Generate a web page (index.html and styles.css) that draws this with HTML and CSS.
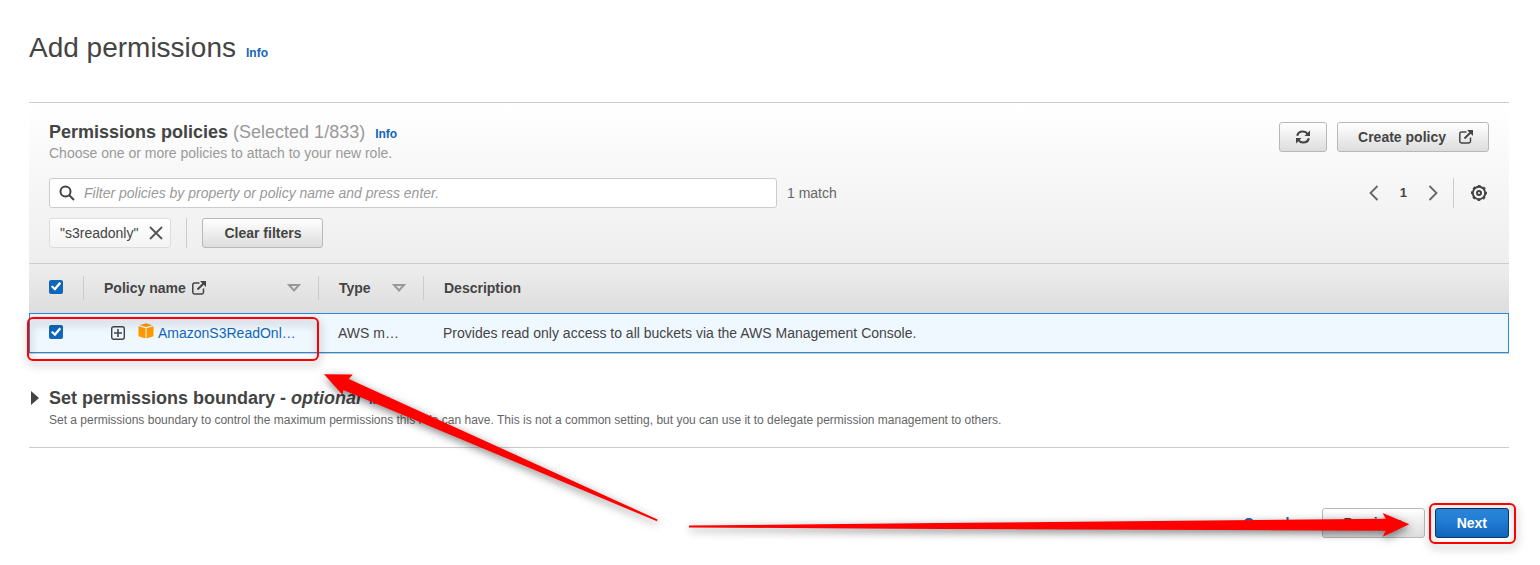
FILE: index.html
```html
<!DOCTYPE html>
<html lang="en">
<head>
<meta charset="utf-8">
<title>Add permissions</title>
<link rel="stylesheet" href="styles.css">
</head>
<body>
<main class="page">
  <header class="page-header">
    <h1>Add permissions</h1>
    <a class="info" href="#">Info</a>
  </header>

  <section class="panel">
    <div class="panel-top">
      <div class="panel-head">
        <div>
          <div class="heading-row">
            <h2>Permissions policies <span class="count">(Selected 1/833)</span></h2>
            <a class="info" href="#">Info</a>
          </div>
          <p class="panel-sub">Choose one or more policies to attach to your new role.</p>
        </div>
        <div class="actions">
          <button class="btn btn-icon" type="button" aria-label="Refresh">
            <svg width="16" height="16" viewBox="0 0 16 16" fill="none" stroke="#444" stroke-width="2.200"><path d="M2.200 6.800C2.800 4 5 2.500 8 2.500c2 0 3.600.9 4.700 2.500M13.800 9.200C13.200 12 11 13.500 8 13.500c-2 0-3.600-.9-4.700-2.500"/><path d="M15 1.500V7H9.500zM1 14.500V9h5.500z" fill="#444" stroke="none"/></svg>
          </button>
          <button class="btn btn-create" type="button">Create policy
            <svg width="16" height="16" viewBox="0 0 16 16" fill="none" stroke="#444" stroke-width="1.500"><path d="M8.500 3H3.500Q1.800 3 1.800 4.700v7.600q0 1.700 1.700 1.700h7.300q1.700 0 1.700-1.700V8.500"/><path d="M6.500 9.500l6-6" stroke-width="2"/><path d="M9 1h6v6z" fill="#444" stroke="none"/></svg>
          </button>
        </div>
      </div>

      <div class="filter-row">
        <div class="search">
          <svg width="16" height="16" viewBox="0 0 16 16" fill="none" stroke="#444" stroke-width="2"><circle cx="6.500" cy="6.500" r="5"/><path d="M10 10l5 5"/></svg>
          <input type="text" aria-label="Filter policies" placeholder="Filter policies by property or policy name and press enter.">
        </div>
        <span class="matches">1 match</span>
        <nav class="pager" aria-label="Pages">
          <button class="plain" type="button" aria-label="Previous page"><svg width="10" height="16" viewBox="0 0 10 16" fill="none" stroke="#666" stroke-width="1.800"><path d="M8.500 1L1.500 8l7 7"/></svg></button>
          <button class="plain page-no" type="button">1</button>
          <button class="plain" type="button" aria-label="Next page"><svg width="10" height="16" viewBox="0 0 10 16" fill="none" stroke="#666" stroke-width="1.800"><path d="M1.500 1l7 7-7 7"/></svg></button>
          <span class="rule"></span>
          <button class="plain" type="button" aria-label="Preferences"><svg width="16" height="16" viewBox="0 0 16 16" fill="none" stroke="#444" stroke-width="2"><circle cx="8" cy="8" r="6.200"/><circle cx="8" cy="8" r="2"/><circle cx="8" cy="8" r="7.300" stroke-width="1.400" stroke-dasharray="2.870 2.870" stroke-dashoffset="1.430"/></svg></button>
        </nav>
      </div>

      <div class="chips">
        <span class="chip">"s3readonly"
          <button class="plain" type="button" aria-label="Remove filter"><svg width="14" height="14" viewBox="0 0 14 14" stroke="#555" stroke-width="1.800"><path d="M1 1l12 12M13 1L1 13"/></svg></button>
        </span>
        <span class="rule"></span>
        <button class="btn" type="button">Clear filters</button>
      </div>
    </div>

    <div class="table-wrap">
      <table>
        <colgroup><col class="c-check"><col class="c-name"><col class="c-type"><col></colgroup>
        <thead>
          <tr>
            <th scope="col"><div class="th-in first"><input type="checkbox" checked aria-label="Select all policies"></div></th>
            <th scope="col"><div class="th-in">Policy name
              <svg class="ext" width="16" height="16" viewBox="0 0 16 16" fill="none" stroke="#444" stroke-width="1.500"><path d="M8.500 3H3.500Q1.800 3 1.800 4.700v7.600q0 1.700 1.700 1.700h7.300q1.700 0 1.700-1.700V8.500"/><path d="M6.500 9.500l6-6" stroke-width="2"/><path d="M9 1h6v6z" fill="#444" stroke="none"/></svg>
              <svg class="sort" width="14" height="8" viewBox="0 0 14 8" fill="none" stroke="#999" stroke-width="2"><path d="M2 1h10L7 6.500z"/></svg></div></th>
            <th scope="col"><div class="th-in">Type
              <svg class="sort" width="14" height="8" viewBox="0 0 14 8" fill="none" stroke="#999" stroke-width="2"><path d="M2 1h10L7 6.500z"/></svg></div></th>
            <th scope="col"><div class="th-in last">Description</div></th>
          </tr>
        </thead>
        <tbody>
          <tr>
            <td class="td-check"><input type="checkbox" checked aria-label="Select AmazonS3ReadOnlyAccess"></td>
            <td><div class="name">
              <button class="plain" type="button" aria-label="Expand"><svg width="14" height="14" viewBox="0 0 14 14" fill="none" stroke="#444" stroke-width="1.400"><rect x=".7" y=".7" width="12.600" height="12.600" rx="2"/><path d="M7 3v8M3 7h8" stroke-width="1.600"/></svg></button>
              <svg class="cube" width="16" height="16" viewBox="0 0 16 16" fill="#f90"><path d="M8 .3l6.300 1.900L8 4.100 1.700 2.200zM.5 3.200l7 2v10.300l-7-2.300zM15.500 3.200l-7 2v10.300l7-2.300z"/></svg>
              <a href="#">AmazonS3ReadOnl…</a></div></td>
            <td class="td-text">AWS m…</td>
            <td class="td-text">Provides read only access to all buckets via the AWS Management Console.</td>
          </tr>
        </tbody>
      </table>
      <span class="mark mark-row"></span>
    </div>
  </section>

  <section class="boundary">
    <details>
      <summary>
        <svg class="caret" width="8" height="14" viewBox="0 0 8 14" fill="#444"><path d="M0 0l8 7-8 7z"/></svg>
        <span class="sum-body">
          <span class="heading-row">
            <span class="sum-title">Set permissions boundary - <em>optional</em></span>
            <a class="info" href="#">Info</a>
          </span>
          <span class="sum-sub">Set a permissions boundary to control the maximum permissions this role can have. This is not a common setting, but you can use it to delegate permission management to others.</span>
        </span>
      </summary>
    </details>
    <svg class="arrow arrow-policy" width="350" height="160" viewBox="0 0 350 160" fill="red"><path d="M4 4.300L32.700 4.500 28.800 9 337.500 149.500 337 151.300 23.300 20 22.700 25z"/></svg>
  </section>

  <footer class="footer">
    <button class="btn btn-link" type="button">Cancel</button>
    <button class="btn" type="button">Previous</button>
    <span class="next-wrap">
      <button class="btn btn-primary" type="button">Next</button>
      <span class="mark mark-next"></span>
    </span>
    <svg class="arrow arrow-next" width="730" height="50" viewBox="0 0 730 50" fill="red"><path d="M4 25.500L255 23 700.700 18.800 697.700 13 724.300 24.300 697.700 36.700 700.700 30.700 255 29 4 27.500z"/></svg>
  </footer>
</main>
</body>
</html>
```
FILE: styles.css
```css
* { box-sizing: border-box; }
body {
  margin: 0;
  background: #fff;
  color: #444;
  font: 14px/20px "Liberation Sans", Arial, sans-serif;
}
h1, h2, p { margin: 0; }
a { color: #1166bb; text-decoration: none; }
svg { flex: none; display: block; }

.page { padding: 30px 31px 27px 29px; }
.page-header { display: flex; align-items: baseline; gap: 10px; }
h1 { font-size: 28px; line-height: 36px; font-weight: 400; }
h2 { font-size: 18px; line-height: 22px; font-weight: 700; }
.info { font-size: 12px; font-weight: 700; line-height: 16px; }
.count { color: #999; font-weight: 400; }

.panel {
  margin-top: 36px;
  border-top: 1px solid #ccc;
  background: linear-gradient(#fff, #eee 160px, #ddd 210px);
}
.panel-top { padding: 18px 20px 15px; }
.panel-head { display: flex; justify-content: space-between; align-items: flex-start; }
.heading-row { display: flex; align-items: baseline; gap: 10px; }
.panel-sub { color: #999; margin-bottom: 15px; }
.actions { display: flex; gap: 10px; padding-top: 1px; }

.btn {
  display: flex;
  align-items: center;
  height: 30px;
  padding: 0 21px;
  border: 1px solid #b8b8b8;
  border-radius: 3px;
  background: linear-gradient(#fff, #ddd);
  color: #444;
  font: 700 14px/20px "Liberation Sans", Arial, sans-serif;
}
.btn-icon { padding: 0 15px; }
.btn-create { gap: 12px; padding: 0 14px 0 20px; }
.btn-link { border-color: transparent; background: none; color: #1166bb; }
.btn-primary { border-color: #0a3a6b; background: linear-gradient(#2e8de5, #1166bb); color: #fff; }
.plain { display: block; padding: 0; border: 0; background: none; color: #444; font: inherit; }

.filter-row, .chips { display: flex; align-items: center; }
.search {
  display: flex;
  align-items: center;
  gap: 9px;
  flex: 0 1 728px;
  height: 30px;
  padding: 0 9px;
  border: 1px solid #ccc;
  border-radius: 3px;
  background: #fff;
}
.search input {
  flex: 1;
  min-width: 0;
  padding: 0;
  border: 0;
  outline: 0;
  background: none;
  color: #444;
  font: 14px/20px "Liberation Sans", Arial, sans-serif;
}
.search input::placeholder { color: #999; font-style: italic; opacity: 1; }
.matches { margin-left: 10px; color: #666; }
.pager { display: flex; align-items: center; margin-left: auto; padding-right: 2px; }
.page-no { margin: 0 21px; font-size: 13px; font-weight: 700; }
.rule { width: 1px; height: 30px; background: #ccc; }
.pager .rule { margin: 0 17px 0 15px; }

.chips { margin-top: 10px; }
.chip {
  display: flex;
  align-items: center;
  gap: 11px;
  height: 30px;
  padding: 0 7px 0 10px;
  border: 1px solid #ddd;
  border-radius: 3px;
  background: linear-gradient(#fff, #f4f4f4);
}
.chips .rule { margin: 0 15px; }

.table-wrap { position: relative; border-bottom: 1px solid #ccc; }
table { width: 100%; table-layout: fixed; border-collapse: separate; border-spacing: 0; }
.c-check { width: 55px; }
.c-name { width: 235px; }
.c-type { width: 105px; }
th {
  height: 50px;
  padding: 0 0 2px;
  border-top: 1px solid #ccc;
  text-align: left;
  vertical-align: middle;
}
.th-in {
  display: flex;
  align-items: center;
  height: 24px;
  padding: 0 17px 0 20px;
  border-right: 1px solid #ccc;
}
.th-in.last { border: 0; }
.ext { margin-left: 5px; }
.sort { margin-left: auto; }
td {
  height: 40px;
  padding: 0;
  border: 1px solid #2e88d8;
  border-width: 1px 0;
  background: #f0f8ff;
}
td:first-child { border-left-width: 1px; }
td:last-child { border-right-width: 1px; }
.td-check, .td-text { padding-left: 19px; }
.name { display: flex; align-items: center; padding-left: 27px; }
.cube { margin: 0 4px 4px 13px; }
input[type="checkbox"] {
  appearance: none;
  display: block;
  width: 14px;
  height: 14px;
  margin: 0 0 2px;
  border-radius: 2px;
  background: #1166bb;
}
input[type="checkbox"]:checked::before {
  content: "";
  display: block;
  width: 14px;
  height: 14px;
  background: #fff;
  clip-path: polygon(14% 52%, 26% 42%, 41% 58%, 74% 18%, 87% 28%, 43% 80%);
}

.boundary { position: relative; padding: 33px 0 17px; border-bottom: 1px solid #ccc; }
summary { display: flex; align-items: flex-start; gap: 10px; list-style: none; }
.caret { margin: 4px 0 0 2px; }
.sum-body { display: block; }
.boundary .heading-row { gap: 8px; }
.sum-title { font-size: 18px; line-height: 22px; font-weight: 700; }
.sum-sub { display: block; margin-top: 1px; font-size: 12px; line-height: 20px; color: #666; }

.footer { position: relative; display: flex; justify-content: flex-end; gap: 10px; margin-top: 60px; }
.next-wrap { position: relative; }

.mark {
  position: absolute;
  border: 2px solid #f00;
  border-radius: 6px;
  filter: drop-shadow(1px 4px 4px rgba(0, 0, 0, 0.4));
  pointer-events: none;
}
.mark-row { left: -2px; bottom: -8px; width: 292px; height: 44px; }
.mark-next { inset: -5px -7px -6px -6px; }
.arrow {
  position: absolute;
  z-index: 1;
  overflow: visible;
  filter: drop-shadow(1px 3px 4px rgba(0, 0, 0, 0.5));
  pointer-events: none;
}
.arrow-policy { left: 291px; top: 16px; }
.arrow-next { right: 94px; top: -8px; }
```
